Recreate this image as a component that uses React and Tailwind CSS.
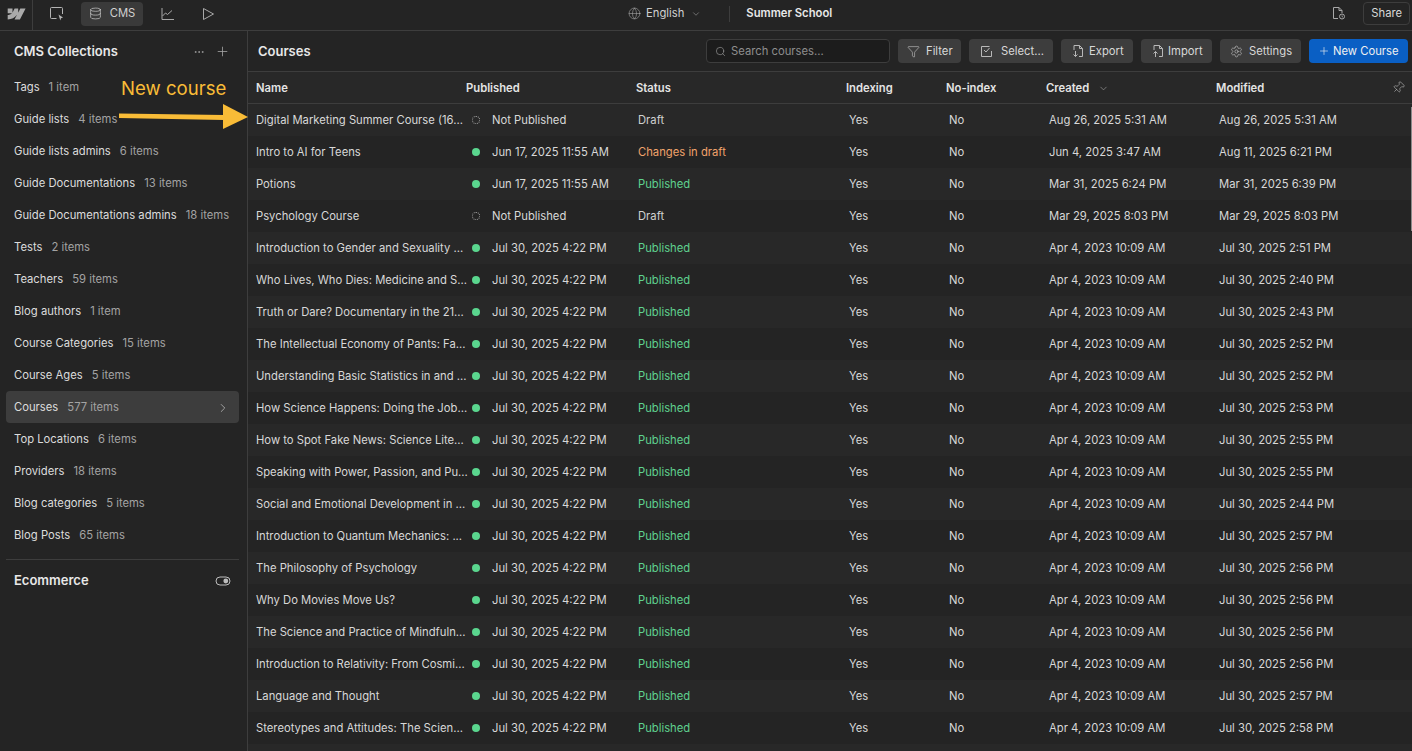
import React from 'react';
import { Database, Globe, ChevronDown, ChevronRight, Plus, Ellipsis, Search, Funnel, Settings, Pin } from 'lucide-react';

const collections = [
  ['Tags', '1 item'],
  ['Guide lists', '4 items'],
  ['Guide lists admins', '6 items'],
  ['Guide Documentations', '13 items'],
  ['Guide Documentations admins', '18 items'],
  ['Tests', '2 items'],
  ['Teachers', '59 items'],
  ['Blog authors', '1 item'],
  ['Course Categories', '15 items'],
  ['Course Ages', '5 items'],
  ['Courses', '577 items', true],
  ['Top Locations', '6 items'],
  ['Providers', '18 items'],
  ['Blog categories', '5 items'],
  ['Blog Posts', '65 items'],
];

const J = 'Jul 30, 2025 4:22 PM';
const A = 'Apr 4, 2023 10:09 AM';
const rows = [
  ['Digital Marketing Summer Course (16...', 'Not Published', 'Draft', 'Aug 26, 2025 5:31 AM', 'Aug 26, 2025 5:31 AM'],
  ['Intro to AI for Teens', 'Jun 17, 2025 11:55 AM', 'Changes in draft', 'Jun 4, 2025 3:47 AM', 'Aug 11, 2025 6:21 PM'],
  ['Potions', 'Jun 17, 2025 11:55 AM', 'Published', 'Mar 31, 2025 6:24 PM', 'Mar 31, 2025 6:39 PM'],
  ['Psychology Course', 'Not Published', 'Draft', 'Mar 29, 2025 8:03 PM', 'Mar 29, 2025 8:03 PM'],
  ['Introduction to Gender and Sexuality ...', J, 'Published', A, 'Jul 30, 2025 2:51 PM'],
  ['Who Lives, Who Dies: Medicine and S...', J, 'Published', A, 'Jul 30, 2025 2:40 PM'],
  ['Truth or Dare? Documentary in the 21...', J, 'Published', A, 'Jul 30, 2025 2:43 PM'],
  ['The Intellectual Economy of Pants: Fa...', J, 'Published', A, 'Jul 30, 2025 2:52 PM'],
  ['Understanding Basic Statistics in and ...', J, 'Published', A, 'Jul 30, 2025 2:52 PM'],
  ['How Science Happens: Doing the Job...', J, 'Published', A, 'Jul 30, 2025 2:53 PM'],
  ['How to Spot Fake News: Science Lite...', J, 'Published', A, 'Jul 30, 2025 2:55 PM'],
  ['Speaking with Power, Passion, and Pu...', J, 'Published', A, 'Jul 30, 2025 2:55 PM'],
  ['Social and Emotional Development in ...', J, 'Published', A, 'Jul 30, 2025 2:44 PM'],
  ['Introduction to Quantum Mechanics: ...', J, 'Published', A, 'Jul 30, 2025 2:57 PM'],
  ['The Philosophy of Psychology', J, 'Published', A, 'Jul 30, 2025 2:56 PM'],
  ['Why Do Movies Move Us?', J, 'Published', A, 'Jul 30, 2025 2:56 PM'],
  ['The Science and Practice of Mindfuln...', J, 'Published', A, 'Jul 30, 2025 2:56 PM'],
  ['Introduction to Relativity: From Cosmi...', J, 'Published', A, 'Jul 30, 2025 2:56 PM'],
  ['Language and Thought', J, 'Published', A, 'Jul 30, 2025 2:57 PM'],
  ['Stereotypes and Attitudes: The Scien...', J, 'Published', A, 'Jul 30, 2025 2:58 PM'],
];

const statusColor = {
  Draft: 'text-[#d0d0d0]',
  Published: 'text-[#5fd18f]',
  'Changes in draft': 'text-[#f0a26b]',
};

const FileIcon = ({ up }) => (
  <svg width="14" height="14" viewBox="0 0 14 14" fill="none" stroke="#b8b8b8" strokeWidth="1">
    <path d="M3 6V1.500h5.500L11.500 4.500V12.500H8" />
    <path d="M8.500 1.500v3h3" />
    {up ? <path d="M4.500 13V7.500M2.500 9.500l2-2 2 2" /> : <path d="M4.500 7v5.500M2.500 10.500l2 2 2-2" />}
  </svg>
);

const ToolButton = ({ icon, label, className }) => (
  <button className={`flex h-6 items-center rounded bg-[#3d3d3d] text-[#d8d8d8] ${className}`}>
    {icon}
    <span className="pt-px">{label}</span>
  </button>
);

const Sidebar = () => (
  <aside className="w-[248px] shrink-0 border-r border-[#3d3d3d] pl-[6px] pr-2">
    <div className="flex h-10 items-center justify-between pl-2 pr-[9px] pt-px">
      <span className="text-[13px] font-semibold text-[#e8e8e8]">CMS Collections</span>
      <div className="flex items-center gap-[10px] text-[#a8a8a8]">
        <Ellipsis size={12} strokeWidth={1.5} />
        <Plus size={15} strokeWidth={1.25} />
      </div>
    </div>
    <div>
      {collections.map(([name, count, active]) => (
        <div key={name} className={`flex h-8 items-center whitespace-nowrap rounded pl-2 pr-[9px] pt-px ${active ? 'bg-[#3d3d3d]' : ''}`}>
          <span className="text-[#dcdcdc]">{name}</span>
          <span className="ml-[9px] text-[#a3a3a3]">{count}</span>
          {active && <ChevronRight size={14} strokeWidth={1.25} className="ml-auto text-[#c4c4c4]" />}
        </div>
      ))}
    </div>
    <div className="mt-2 flex h-[42px] items-center justify-between border-t border-[#3d3d3d] pl-2 pr-2 pt-px">
      <span className="text-[13px] font-semibold text-[#e8e8e8]">Ecommerce</span>
      <svg width="16" height="12" viewBox="0 0 16 12" fill="none">
        <rect x="1" y="2" width="14" height="8" rx="4" stroke="#bdbdbd" />
        <circle cx="10.800" cy="6" r="2.400" fill="#bdbdbd" />
      </svg>
    </div>
  </aside>
);

const gridCols = 'grid grid-cols-[210px_170px_210px_100px_100px_170px_1fr]';

const Table = () => (
  <div>
    <div className={`${gridCols} relative h-8 items-center border-b border-[#3d3d3d] bg-[#282828] pl-2 pt-px font-semibold text-[#e4e4e4]`}>
      <span>Name</span>
      <span>Published</span>
      <span>Status</span>
      <span>Indexing</span>
      <span>No-index</span>
      <span className="flex items-center">
        Created
        <ChevronDown size={11} strokeWidth={1.25} className="ml-[9px] text-[#b0b0b0]" />
      </span>
      <span>Modified</span>
      <Pin size={13} strokeWidth={1} className="absolute right-[7px] top-[9px] rotate-45 text-[#c8c8c8]" />
    </div>
    {rows.map((row, i) => (
      <div key={row[0]} className={`${gridCols} h-8 items-center pl-2 text-[#d8d8d8] ${i % 2 === 0 ? 'bg-[#282828]' : 'bg-[#242424]'}`}>
        <span className="whitespace-nowrap">{row[0]}</span>
        <span className="flex items-center">
          {row[1] === 'Not Published' ? (
            <span className="ml-[6px] h-2 w-2 rounded-full border border-dotted border-[#a8a8a8]" />
          ) : (
            <span className="ml-[6px] h-2 w-2 rounded-full bg-[#5ad68e]" />
          )}
          <span className="ml-3 whitespace-nowrap">{row[1]}</span>
        </span>
        <span className={`pl-[2px] ${statusColor[row[2]]}`}>{row[2]}</span>
        <span className="pl-[3px]">Yes</span>
        <span className="pl-[3px]">No</span>
        <span className="whitespace-nowrap pl-[3px]">{row[3]}</span>
        <span className="whitespace-nowrap pl-[3px]">{row[4]}</span>
      </div>
    ))}
    <div className="h-8 bg-[#282828]" />
  </div>
);

export default function App() {
  return (
    <div className="relative flex h-[751px] w-[1412px] flex-col overflow-hidden bg-[#242424] font-['Inter',sans-serif] text-[11.25px]">
      {/* Top bar */}
      <header className="flex h-[31px] shrink-0 items-center border-b border-[#3d3d3d] pb-[3px] text-[#d0d0d0]">
        <div className="flex h-[30px] w-[33px] items-center justify-center self-start border-r border-[#3d3d3d] pb-[3px]">
          <svg width="19" height="12" viewBox="0 0 19 12" fill="#aaaaaa">
            <path d="M18.600.5l-5.700 11H7.500l2.400-4.600h-.1C7.800 9.500 4.900 11.200 .7 11.500V7s2.700-.2 4.300-1.800H.7V.5h4.800v3.900h.1L7.600.5h3.600v3.900h.1L13.300.5z" />
          </svg>
        </div>
        <svg className="ml-[17px]" width="14" height="14" viewBox="0 0 14 14" fill="none" stroke="#b4b4b4" strokeWidth="1">
          <path d="M6.500 11.500H1.500a1 1 0 0 1-1-1V1.500a1 1 0 0 1 1-1h10a1 1 0 0 1 1 1V7" />
          <path d="M8.500 7.500l4.500 3-2 .7-.7 2.300z" fill="#b4b4b4" stroke="none" />
        </svg>
        <div className="ml-[17px] flex h-6 w-[62px] items-center justify-center gap-[8px] rounded bg-[#3a3a3a]">
          <Database size={13} strokeWidth={1.25} className="text-[#d0d0d0]" />
          <span>CMS</span>
        </div>
        <svg className="ml-[18px]" width="14" height="14" viewBox="0 0 14 14" fill="none" stroke="#a8a8a8" strokeWidth="1">
          <path d="M1 1v11.500h12" />
          <path d="M1.500 9l3-3 2 1.500 4.500-4" />
        </svg>
        <svg className="ml-[26px]" width="14" height="14" viewBox="0 0 14 14" fill="none" stroke="#a8a8a8" strokeWidth="1">
          <path d="M2.500 1.500v11L12.500 7z" />
        </svg>
        <div className="ml-[413px] flex items-center">
          <Globe size={13} strokeWidth={1} className="text-[#b0b0b0]" />
          <span className="ml-[5px]">English</span>
          <ChevronDown size={10} strokeWidth={1.25} className="ml-[7px] text-[#b0b0b0]" />
        </div>
        <div className="ml-[28px] h-4 w-px bg-[#3d3d3d]" />
        <span className="ml-[16px] font-semibold text-[#e8e8e8]">Summer School</span>
        <svg className="ml-[499px]" width="15" height="15" viewBox="0 0 15 15" fill="none" stroke="#a8a8a8" strokeWidth="1">
          <path d="M7 12.500H2.500V1.500H8L11 4.500V7" />
          <path d="M8 1.500v3h3" />
          <circle cx="11" cy="10.500" r="2.500" />
          <path d="M11 9.500v1l.8.5" />
        </svg>
        <button className="ml-[17px] flex h-[23px] w-[47px] items-center justify-center rounded border border-[#3d3d3d] text-[#d8d8d8]">Share</button>
      </header>

      <div className="flex min-h-0 flex-1">
        <Sidebar />
        <main className="min-w-0 flex-1">
          {/* Toolbar */}
          <div className="flex h-[41px] items-center border-b border-[#3d3d3d] pl-[10px] pr-1">
            <span className="pt-px text-[13px] font-semibold text-[#e8e8e8]">Courses</span>
            <div className="ml-auto flex items-center gap-2">
              <div className="flex h-6 w-[184px] items-center rounded border border-[#3d3d3d] bg-[#1c1c1c] pl-2 text-[#8e8e8e]">
                <Search size={11} strokeWidth={1.25} className="text-[#a8a8a8]" />
                <span className="ml-[5px] pt-px">Search courses...</span>
              </div>
              <ToolButton className="w-[63px] pl-[9px]" icon={<Funnel size={13} strokeWidth={1} className="mr-[6px]" />} label="Filter" />
              <ToolButton
                className="w-[84px] pl-[11px] gap-[8px]"
                icon={
                  <svg width="13" height="13" viewBox="0 0 13 13" fill="none" stroke="#b8b8b8" strokeWidth="1">
                    <path d="M11.500 6v5.500h-10v-10h8" />
                    <path d="M4 5l2 2 3.500-4" />
                  </svg>
                }
                label="Select..."
              />
              <ToolButton className="w-[72px] pl-[10px] gap-[4px]" icon={<FileIcon />} label="Export" />
              <ToolButton className="w-[71px] pl-[10px] gap-[3px]" icon={<FileIcon up />} label="Import" />
              <ToolButton className="w-[81px] pl-[10px] gap-[6px]" icon={<Settings size={13} strokeWidth={1} />} label="Settings" />
              <button className="flex h-6 w-[99px] items-center rounded bg-[#0a5fc4] pl-[9px] text-[#f0f0f0]">
                <Plus size={12} strokeWidth={1.25} className="mr-[3px]" />
                <span className="pt-px">New Course</span>
              </button>
            </div>
          </div>
          <Table />
        </main>
      </div>

      {/* Annotation drawn over the screenshot */}
      <span className="absolute left-[121px] top-[77px] text-[18.600px] leading-[22px] text-[#f9bc37]">New course</span>
      <svg className="absolute left-[118px] top-[103px]" width="131" height="26" viewBox="0 0 131 26">
        <path d="M1 10.500L106 12V17L1 15z" fill="#f9bc37" />
        <path d="M105 1L130 14L105 26z" fill="#f9bc37" />
      </svg>
      {/* scrollbar thumb */}
      <div className="absolute right-0 top-[107px] h-[124px] w-px bg-[#8a8a8a]" />
    </div>
  );
}
